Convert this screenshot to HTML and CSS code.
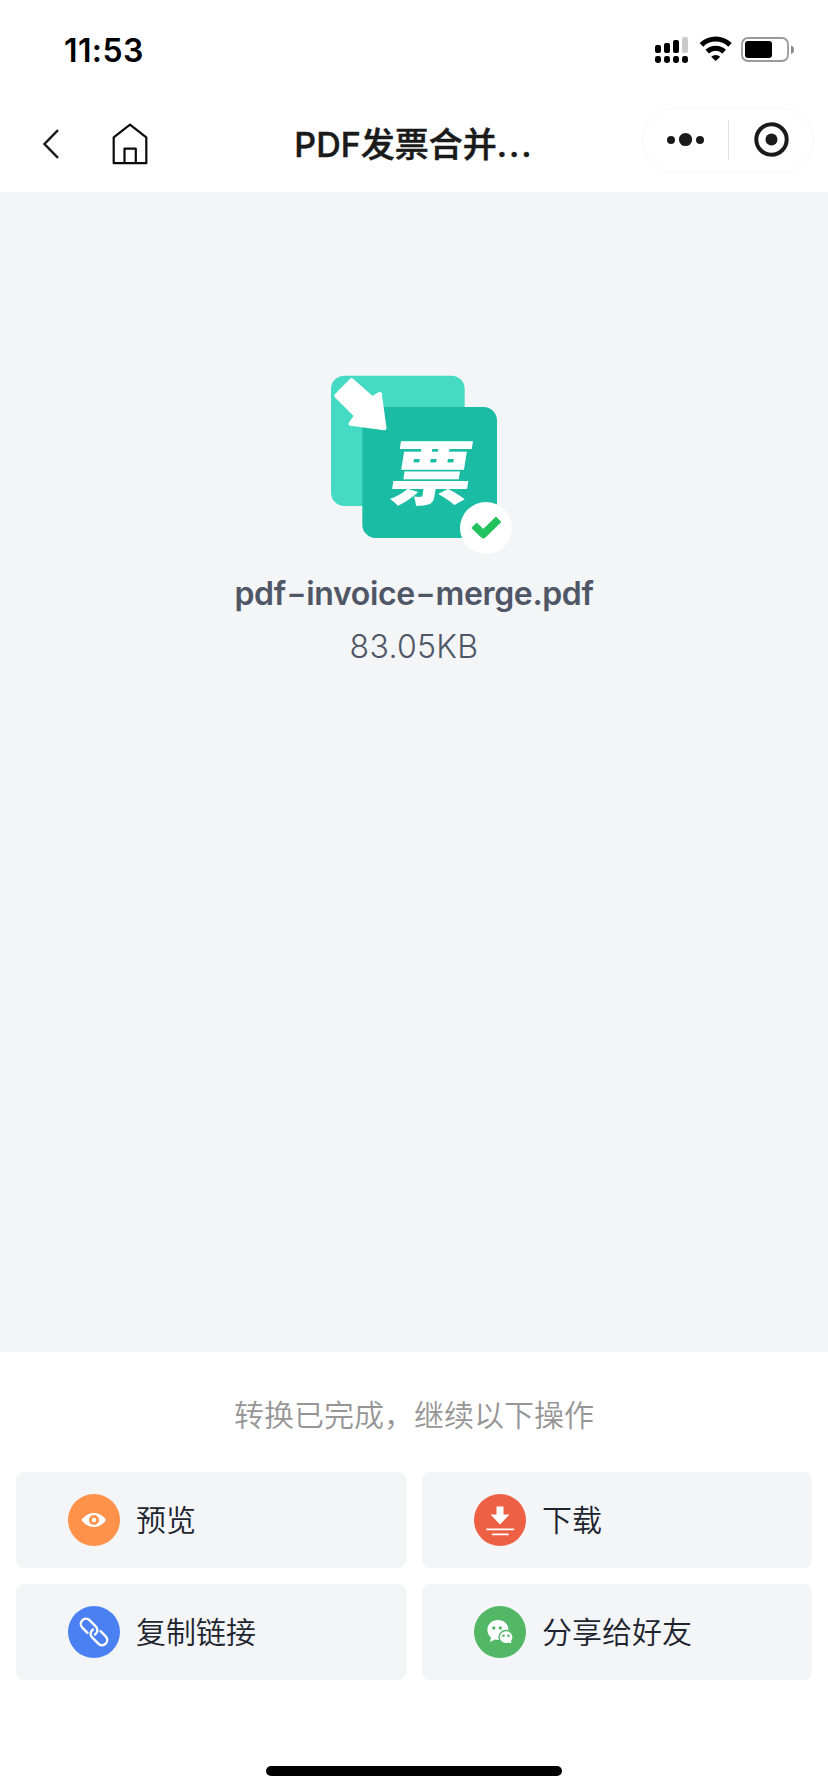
FILE: index.html
```html
<!DOCTYPE html>
<html lang="zh-CN">
<head>
<meta charset="utf-8">
<meta name="viewport" content="width=device-width, initial-scale=1">
<title>PDF发票合并</title>
<link rel="stylesheet" href="styles.css">
</head>
<body>
<div class="screen">
  <header class="header">
    <div class="status">
      <span class="time">11:53</span>
      <svg class="status-icons" viewBox="0 0 140 28" width="140" height="28" aria-hidden="true">
        <g>
          <rect x="0" y="9" width="6" height="8" rx="2"/>
          <rect x="9" y="7" width="6" height="10" rx="2"/>
          <rect x="18" y="4" width="6" height="13" rx="2"/>
          <rect x="27" y="1" width="6" height="16" rx="2" fill="#cbcbcb"/>
          <rect x="0" y="20" width="6" height="7" rx="2.4"/>
          <rect x="9" y="20" width="6" height="7" rx="2.4"/>
          <rect x="18" y="20" width="6" height="7" rx="2.4"/>
          <rect x="27" y="20" width="6" height="7" rx="2.4"/>
        </g>
        <g fill="none" stroke="#000" stroke-width="5">
          <path d="M46.400 8.900a20.500 20.500 0 0 1 28.600 0"/>
          <path d="M52.200 15.600a12.200 12.200 0 0 1 17 0"/>
        </g>
        <path d="M56.200 20.800a6.600 6.600 0 0 1 9 0L60.700 25z"/>
        <rect x="87" y="2" width="46" height="23" rx="6" fill="none" stroke="#999" stroke-width="1.800"/>
        <rect x="90" y="5" width="27" height="17" rx="3"/>
        <path d="M136 9.500c4 1 4 7.500 0 8.500z" fill="#8c8c8c"/>
      </svg>
    </div>
    <nav class="nav">
      <div class="nav-left">
        <svg width="16" height="30" viewBox="0 0 16 30"><path d="M15 1.200 1.500 15 15 28.800" fill="none" stroke="#1a1a1a" stroke-width="2.400"/></svg>
        <svg width="36" height="42" viewBox="0 0 36 42"><g fill="none" stroke="#0a0a0a" stroke-width="2.200" stroke-linejoin="round"><path d="M1.700 14.300 18 1.700l16.300 12.600v25.900H1.700z"/><path d="M12.500 40V25.700h11.300V40"/></g></svg>
      </div>
      <h1 class="title">PDF发票合并<span class="dots">...</span></h1>
      <div class="capsule">
        <svg width="172" height="64" viewBox="0 0 172 64">
          <g fill="#1a1a1a"><circle cx="29" cy="32" r="4"/><circle cx="43.500" cy="31.500" r="6.600"/><circle cx="58" cy="32" r="4"/><circle cx="129.500" cy="31.500" r="6"/></g>
          <path d="M86.500 12v40" stroke="#e3e3e3" stroke-width="1"/>
          <circle cx="129.500" cy="31.500" r="15.200" fill="none" stroke="#1a1a1a" stroke-width="4"/>
        </svg>
      </div>
    </nav>
  </header>

  <main class="file">
    <svg class="file-icon" width="168" height="164" viewBox="60 75 504 492">
      <rect x="63" y="77" width="401" height="391" rx="40" fill="#44dac3"/>
      <rect x="157" y="171" width="404" height="393" rx="40" fill="#1abca3"/>
      <path d="M125 91 187 146 209 132 223 234 122 221 139 197 79 137z" fill="#fff" stroke="#fff" stroke-width="13" stroke-linejoin="round"/>
      <text class="logo-char" transform="translate(231 446) skewX(-9) scale(1.170 1)" x="0" y="0">票</text>
      <circle cx="528" cy="534" r="78" fill="#fff"/>
      <path d="m492 526 28 27 46-45" fill="none" stroke="#22c35c" stroke-width="23" stroke-linejoin="round"/>
    </svg>
    <div class="file-name">pdf<span class="dash">-</span>invoice<span class="dash">-</span>merge.pdf</div>
    <div class="file-size">83.05KB</div>
  </main>

  <section class="panel">
    <p class="tip">转换已完成，继续以下操作</p>
    <div class="actions">
      <button class="action">
        <svg width="52" height="52" viewBox="0 0 52 52"><circle cx="26" cy="26" r="26" fill="#fe924b"/><path d="M13.500 26C20 16.700 32 16.700 38 26 32 35.300 20 35.300 13.500 26z" fill="#fff"/><circle cx="26" cy="26" r="3.700" fill="#fff" stroke="#fe924b" stroke-width="2.800"/></svg>
        <span>预览</span>
      </button>
      <button class="action">
        <svg width="52" height="52" viewBox="0 0 52 52"><circle cx="26" cy="26" r="26" fill="#ee6044"/><path d="M22.500 12.500h7v8h6L26 30.500l-9.500-10h6z" fill="#fff"/><path d="M13 35.300h26.500M18.500 40.300h15.500" stroke="#fff" stroke-width="1.700" stroke-linecap="round"/></svg>
        <span>下载</span>
      </button>
      <button class="action">
        <svg width="52" height="52" viewBox="0 0 52 52"><circle cx="26" cy="26" r="26" fill="#4a80f2"/><g transform="rotate(45 26 26)" fill="none" stroke="#fff" stroke-width="2.400" stroke-linecap="round"><path d="M22 31.200H14.700a5.200 5.200 0 0 1 0-10.400H23.500a5.200 5.200 0 0 1 5 6.200"/><path d="M30 20.800h7.300a5.200 5.200 0 0 1 0 10.400H28.500a5.200 5.200 0 0 1-5-6.200"/></g></svg>
        <span>复制链接</span>
      </button>
      <button class="action">
        <svg width="52" height="52" viewBox="0 0 52 52"><circle cx="26" cy="26" r="26" fill="#53b866"/><path d="M24 14c-6 0-10.600 4.200-10.600 9.800 0 3.400 1.400 6 3.600 7.800l-1 4.400 5-2.500c1 .3 2 .4 3 .4 6 0 10.500-4.500 10.500-10.100S30 14 24 14z" fill="#fff"/><path d="M32 24.500c-4 0-7 2.900-7 6.600s3 6.600 7 6.600c1 0 1.700-.1 2.500-.4l4 .8-.8-2.800c.9-1.100 1.400-2.600 1.400-4.200 0-3.700-3.100-6.600-7.100-6.600z" fill="#fff" stroke="#53b866" stroke-width="1.400"/><g fill="#53b866"><circle cx="19.800" cy="22" r="1.700"/><circle cx="26.300" cy="22" r="1.700"/><circle cx="29.500" cy="29.700" r="1.300"/><circle cx="34.500" cy="29.700" r="1.300"/></g></svg>
        <span>分享给好友</span>
      </button>
    </div>
    <div class="home-indicator"></div>
  </section>
</div>
</body>
</html>
```
FILE: styles.css
```css
* { box-sizing: border-box; }
body {
  margin: 0;
  background: #fff;
  font-family: Inter, "Noto Sans CJK SC", sans-serif;
}
.screen {
  width: 828px;
  height: 1792px;
  display: flex;
  flex-direction: column;
  overflow: hidden;
}
.header { height: 192px; background: #fff; }
.status {
  height: 96px;
  padding: 0 32px 0 64px;
  display: flex;
  justify-content: space-between;
  align-items: center;
}
.time { font-size: 32px; font-weight: 600; line-height: 40px; padding-top: 5px; letter-spacing: 0.4px; }
.status-icons { margin-top: 3px; margin-right: 1px; }
.nav {
  height: 96px;
  display: grid;
  grid-template-columns: 1fr auto 1fr;
  align-items: center;
}
.nav-left { display: flex; align-items: center; gap: 53px; padding-left: 43px; }
.title {
  margin: 1px 0 0;
  font-size: 34px;
  font-weight: 500;
  line-height: 48px;
  color: #1a1a1a;
  white-space: nowrap;
  -webkit-text-stroke: 0.5px #1a1a1a;
}
.dots { letter-spacing: 2px; }
.capsule {
  justify-self: end;
  width: 172px;
  height: 64px;
  margin: 0 14px 8px 0;
  border-radius: 32px;
  box-shadow: inset 0 0 0 1px #f7f7f7;
}
.capsule svg, .action svg, .file-icon { display: block; }
.file {
  height: 1160px;
  padding-top: 183px;
  background: #f3f5f7;
  display: flex;
  flex-direction: column;
  align-items: center;
  color: #4f5666;
}
.file-icon { overflow: visible; }
.logo-char {
  font-family: "Noto Sans CJK SC", sans-serif;
  font-weight: 900;
  font-size: 210px;
  fill: #fff;
}
.file-name {
  margin-top: 35px;
  font-size: 32px;
  font-weight: 600;
  line-height: 40px;
  letter-spacing: -0.35px;
}
.dash { display: inline-block; transform: scaleX(1.35); margin: 0 3px; }
.file-size { margin-top: 13px; font-size: 32px; font-weight: 300; line-height: 40px; letter-spacing: 0.3px; }
.panel {
  flex: 1;
  background: #fff;
  display: flex;
  flex-direction: column;
  align-items: center;
}
.tip {
  margin: 39px 0 37px;
  padding-bottom: 0;
  height: 44px;
  margin-bottom: 37px;
  font-family: "Noto Sans CJK SC", sans-serif;
  font-size: 30px;
  font-weight: 350;
  line-height: 44px;
  color: #969696;
}
.actions {
  width: 796px;
  margin-top: -20px;
  padding-top: 0;
  display: grid;
  grid-template-columns: 1fr 1fr;
  grid-auto-rows: 96px;
  gap: 16px;
  margin-top: 0;
}
.action {
  display: flex;
  align-items: center;
  gap: 16px;
  padding: 0 0 0 52px;
  border: 0;
  border-radius: 8px;
  background: #f3f5f7;
  color: #20242f;
  font-family: "Noto Sans CJK SC", sans-serif;
  font-size: 30px;
  font-weight: 350;
}
.action span { padding-bottom: 4px; }
.home-indicator {
  width: 296px;
  height: 10px;
  margin-top: 86px;
  border-radius: 5px;
  background: #000;
}
```
